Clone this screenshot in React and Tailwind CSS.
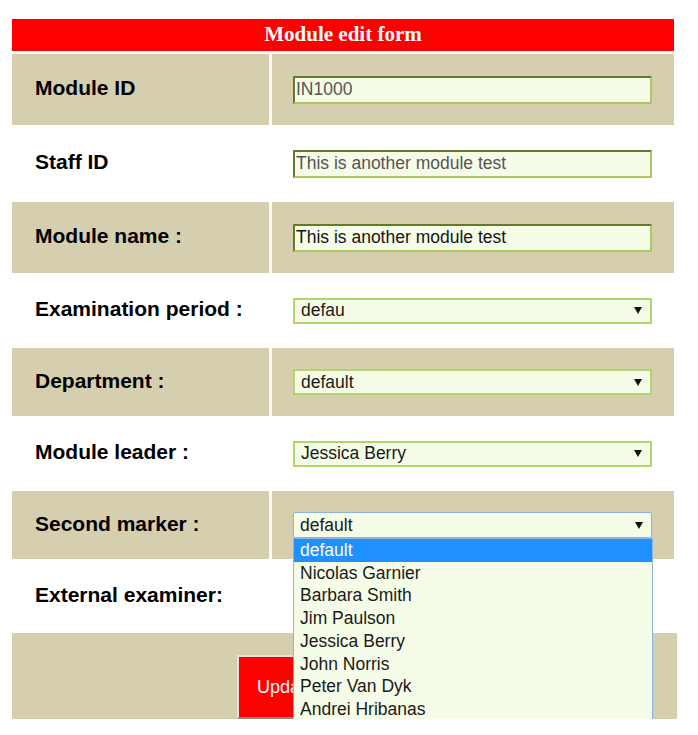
const people = [
  "default",
  "Nicolas Garnier",
  "Barbara Smith",
  "Jim Paulson",
  "Jessica Berry",
  "John Norris",
  "Peter Van Dyk",
  "Andrei Hribanas",
];

const rows = [
  { label: "Module ID", shaded: true, h: "h-[71px]", kind: "input", value: "IN1000", muted: true },
  { label: "Staff ID", shaded: false, h: "h-[71px]", kind: "input", value: "This is another module test", muted: true },
  { label: "Module name :", shaded: true, h: "h-[71px]", kind: "input", value: "This is another module test" },
  { label: "Examination period :", shaded: false, h: "h-[69px]", kind: "select", value: "defau" },
  { label: "Department :", shaded: true, h: "h-[68px]", kind: "select", value: "default" },
  { label: "Module leader :", shaded: false, h: "h-[69px]", kind: "select", value: "Jessica Berry" },
  { label: "Second marker :", shaded: true, h: "h-[68px]", kind: "select", value: "default", open: true },
  // its select sits under the open list above, so nothing is drawn there
  { label: "External examiner:", shaded: false, h: "h-[68px]", kind: "hidden" },
];

const Arrow = () => (
  <svg width="8" height="7" viewBox="0 0 8 7" className="shrink-0">
    <polygon points="0,0 8,0 4,7" fill="#111" />
  </svg>
);

const TextField = ({ value, muted }) => (
  <input
    readOnly
    value={value}
    className={`w-[359px] h-[28px] px-[1px] bg-[#f5fde8] border-2 border-t-[#66782a] border-l-[#66782a] border-r-[#a9ca5c] border-b-[#a9ca5c] outline-none text-[17.5px] ${
      muted ? "text-[#555555]" : "text-[#151515]"
    }`}
  />
);

const SelectField = ({ value, open }) => (
  <div className="relative">
    <div
      className={`w-[359px] h-[26px] flex items-center justify-between pl-[6px] pr-[8px] bg-[#f5fde8] text-[17.5px] text-[#1a1a1a] ${
        open ? "border border-[#8fb2dc] rounded-[2px]" : "border-2 border-[#b3d36b]"
      }`}
    >
      <span>{value}</span>
      <Arrow />
    </div>
    {open && (
      <ul className="absolute top-full left-0 z-10 w-[360px] bg-[#f5fde8] border border-[#8fb2dc] text-[17.5px] leading-[22.7px] text-[#1a1a1a]">
        {people.map((name, i) => (
          <li
            key={name}
            className={`pl-[6px] ${i === 0 ? "bg-[#1e90ff] text-white" : ""}`}
          >
            {name}
          </li>
        ))}
      </ul>
    )}
  </div>
);

const App = () => {
  return (
    <div className="min-h-screen bg-white font-['Liberation_Sans',Arial,sans-serif]">
      <div className="h-[719px] overflow-hidden pt-[19px] pl-[12px]">
        <div className="w-[662px] flex flex-col gap-[3px]">
          {/* title bar */}
          <div className="h-[32px] bg-[#ff0000] flex items-center justify-center text-white font-bold text-[21px] font-['Liberation_Serif','Times_New_Roman',serif]">
            Module edit form
          </div>

          {rows.map((row) => (
            <div
              key={row.label}
              className={`grid grid-cols-[257px_402px] gap-[3px] ${row.h}`}
            >
              <div
                className={`flex items-center pl-[23px] pb-[3px] text-[21px] font-bold text-black ${
                  row.shaded ? "bg-[#d5cfb0]" : ""
                }`}
              >
                {row.label}
              </div>
              <div
                className={`flex items-center pl-[21px] ${
                  row.shaded ? "bg-[#d5cfb0]" : ""
                }`}
              >
                {row.kind === "input" && (
                  <TextField value={row.value} muted={row.muted} />
                )}
                {row.kind === "select" && (
                  <SelectField value={row.value} open={row.open} />
                )}
              </div>
            </div>
          ))}

          {/* submit row */}
          <div className="w-[665px] h-[100px] bg-[#d5cfb0] flex justify-center pt-[22px]">
            <button className="w-[215px] h-[64px] bg-[#ff0000] text-white text-[18px] text-left pl-[18px] border-2 border-t-[#e2e2e2] border-l-[#e2e2e2] border-r-[#8a8a8a] border-b-[#8a8a8a]">
              Update module
            </button>
          </div>
        </div>
      </div>
    </div>
  );
};

export default App;
